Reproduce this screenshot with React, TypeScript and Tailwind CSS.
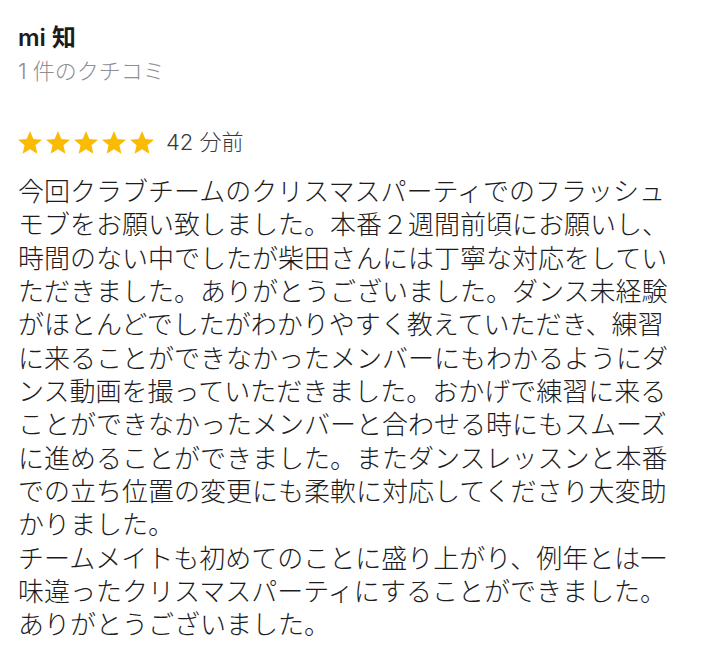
import React from "react";

const lines = [
  "今回クラブチームのクリスマスパーティでのフラッシュ",
  "モブをお願い致しました。本番２週間前頃にお願いし、",
  "時間のない中でしたが柴田さんには丁寧な対応をしてい",
  "ただきました。ありがとうございました。ダンス未経験",
  "がほとんどでしたがわかりやすく教えていただき、練習",
  "に来ることができなかったメンバーにもわかるようにダ",
  "ンス動画を撮っていただきました。おかげで練習に来る",
  "ことができなかったメンバーと合わせる時にもスムーズ",
  "に進めることができました。またダンスレッスンと本番",
  "での立ち位置の変更にも柔軟に対応してくださり大変助",
  "かりました。",
  "チームメイトも初めてのことに盛り上がり、例年とは一",
  "味違ったクリスマスパーティにすることができました。",
  "ありがとうございました。",
];

function Star() {
  return (
    <svg width="24" height="23" viewBox="2 2 20 19.2" className="shrink-0">
      <path
        d="M12 17.27L18.18 21l-1.64-7.03L22 9.24l-7.19-.61L12 2 9.19 8.63 2 9.24l5.46 4.73L5.82 21z"
        fill="#FABB05"
      />
    </svg>
  );
}

export default function App() {
  return (
    <div className="w-[717px] h-[651px] overflow-hidden bg-white px-[18px] font-['Noto_Sans_CJK_JP',sans-serif]">
      <div className="pt-[23px] text-[24px] leading-[30px] font-semibold text-[#1c1c1e] font-['Inter','Noto_Sans_CJK_JP',sans-serif]">
        mi 知
      </div>
      <div className="mt-[4px] text-[22px] leading-[28px] font-light text-[#8e8e93] font-['Inter','Noto_Sans_CJK_JP',sans-serif]">
        1 件のクチコミ
      </div>
      <div className="mt-[45px] flex items-center h-[24px]">
        <div className="flex gap-[4px]">
          <Star />
          <Star />
          <Star />
          <Star />
          <Star />
        </div>
        <span className="ml-[12px] text-[22px] leading-[24px] font-light text-[#3a3a3c] font-['Inter','Noto_Sans_CJK_JP',sans-serif]">
          42 分前
        </span>
      </div>
      <div className="mt-[19px] text-[26px] leading-[33.35px] font-light text-[#1c1c1e] whitespace-nowrap">
        {lines.map((l, i) => (
          <div key={i}>{l}</div>
        ))}
      </div>
    </div>
  );
}
